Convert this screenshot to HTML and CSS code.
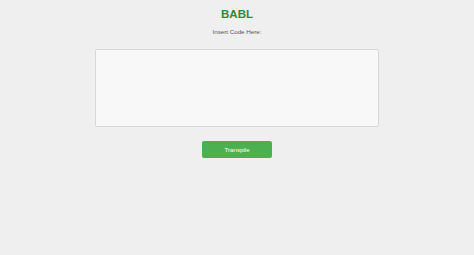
FILE: index.html
```html
<!DOCTYPE html>
<html>
<head>
<meta charset="utf-8">
<link rel="stylesheet" href="styles.css">
</head>
<body>
<div class="page">
  <h1 class="title">BABL</h1>
  <p class="label">Insert Code Here:</p>
  <textarea class="code"></textarea>
  <button class="transpile">Transpile</button>
</div>
</body>
</html>
```
FILE: styles.css
```css
html, body {
  margin: 0;
  padding: 0;
  background: #efefef;
  font-family: "Liberation Sans", Arial, sans-serif;
}
.page {
  display: flex;
  flex-direction: column;
  align-items: center;
  padding-top: 8px;
}
.title {
  margin: 0;
  font-size: 11.5px;
  line-height: 13px;
  font-weight: bold;
  color: #2f8a3a;
}
.label {
  margin: 7px 0 0;
  font-size: 6.2px;
  line-height: 8px;
  color: #555;
}
.code {
  box-sizing: border-box;
  margin-top: 13px;
  width: 284px;
  height: 78px;
  background: #f8f8f8;
  border: 1px solid #d8d8d8;
  border-radius: 2px;
  resize: none;
  padding: 4px;
}
.transpile {
  box-sizing: border-box;
  margin-top: 14px;
  width: 70px;
  height: 17px;
  background: #4caf50;
  border: none;
  border-radius: 2px;
  color: #fff;
  font-family: "Liberation Sans", Arial, sans-serif;
  font-size: 6.2px;
  padding: 0;
}
```
